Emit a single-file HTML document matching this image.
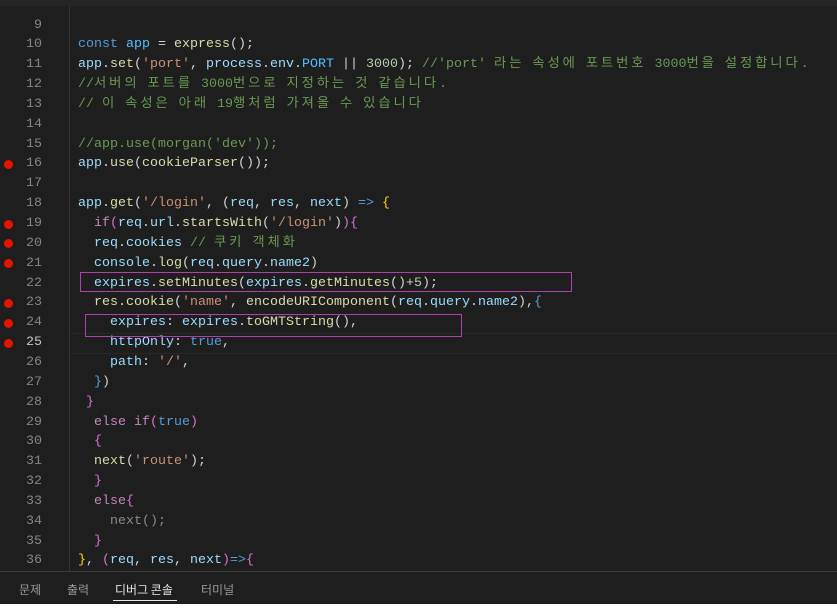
<!DOCTYPE html>
<html><head><meta charset="utf-8"><style>
html,body{margin:0;padding:0;width:837px;height:610px;overflow:hidden;background:#1e1e1e;}
.ed{position:absolute;left:0;top:0;width:837px;height:572px;background:#1e1e1e;overflow:hidden;}
.gl{position:absolute;left:69px;top:0;width:1px;height:572px;background:#333;}
.ln{position:absolute;left:0;width:42px;text-align:right;color:#858585;font:13.33px "Liberation Mono",monospace;}
.cd{position:absolute;left:78px;white-space:pre;color:#d4d4d4;font:13.33px "Liberation Mono",monospace;}
.k{font-family:"Noto Sans CJK KR",sans-serif;letter-spacing:2.9px;line-height:0;}
.bp{position:absolute;left:4px;width:9px;height:9px;border-radius:50%;background:#e51400;}
.b{color:#569cd6}.v{color:#4fc1ff}.f{color:#dcdcaa}.s{color:#ce9178}.c{color:#6a9955}.n{color:#b5cea8}.p{color:#9cdcfe}.m{color:#c586c0}.y{color:#ffd700}.pk{color:#da70d6}.g{color:#8a8a8a}
.box{position:absolute;border:1px solid #b040b0;}
.panel{position:absolute;left:0;top:571px;width:837px;height:33px;background:#1e1e1e;border-top:1px solid #3c3c3c;}
.tab{position:absolute;top:9px;color:#9a9a9a;font:12px "Noto Sans CJK KR",sans-serif;}
</style></head><body>
<div class="ed">
<div class="gl"></div>
<div class="cd" style="top:-12px;color:#777">const cookieParser = require('cookie-parser');</div>
<div style="position:absolute;left:0;top:0;width:837px;height:6px;background:#252526"></div>
<div style="position:absolute;left:70px;top:333px;width:767px;height:19px;border-top:1px solid #282828;border-bottom:1px solid #282828"></div>
<div id="L"></div>
<div class="box" style="left:80px;top:272px;width:490px;height:18px"></div>
<div class="box" style="left:85px;top:314px;width:375px;height:21px"></div>
</div>
<div class="panel">
<div class="tab" style="left:19px">문제</div>
<div class="tab" style="left:67px">출력</div>
<div class="tab" style="left:115px;color:#e7e7e7">디버그 콘솔</div>
<div style="position:absolute;left:113px;top:28px;width:64px;height:1px;background:#e7e7e7"></div>
<div class="tab" style="left:201px">터미널</div>
</div>
<div style="position:absolute;left:0;top:604px;width:837px;height:6px;background:#fff"></div>
<script>
var L=[
[9,''],
[10,'<span class="b">const</span> <span class="v">app</span> = <span class="f">express</span>();'],
[11,'<span class="p">app</span>.<span class="f">set</span>(<span class="s">\'port\'</span>, <span class="p">process</span>.<span class="p">env</span>.<span class="v">PORT</span> || <span class="n">3000</span>); <span class="c">//\'port\' <span class="k">라는</span> <span class="k">속성에</span> <span class="k">포트번호</span> 3000<span class="k">번을</span> <span class="k">설정합니다</span>.</span>'],
[12,'<span class="c">//<span class="k">서버의</span> <span class="k">포트를</span> 3000<span class="k">번으로</span> <span class="k">지정하는</span> <span class="k">것</span> <span class="k">같습니다</span>.</span>'],
[13,'<span class="c">// <span class="k">이</span> <span class="k">속성은</span> <span class="k">아래</span> 19<span class="k">행처럼</span> <span class="k">가져올</span> <span class="k">수</span> <span class="k">있습니다</span></span>'],
[14,''],
[15,'<span class="c">//app.use(morgan(\'dev\'));</span>'],
[16,'<span class="p">app</span>.<span class="f">use</span>(<span class="f">cookieParser</span>());',1],
[17,''],
[18,'<span class="p">app</span>.<span class="f">get</span>(<span class="s">\'/login\'</span>, (<span class="p">req</span>, <span class="p">res</span>, <span class="p">next</span>) <span class="b">=&gt;</span> <span class="y">{</span>'],
[19,'  <span class="m">if</span><span class="pk">(</span><span class="p">req</span>.<span class="p">url</span>.<span class="f">startsWith</span>(<span class="s">\'/login\'</span>)<span class="pk">)</span><span class="pk">{</span>',1],
[20,'  <span class="p">req</span>.<span class="p">cookies</span> <span class="c">// <span class="k">쿠키</span> <span class="k">객체화</span></span>',1],
[21,'  <span class="p">console</span>.<span class="f">log</span>(<span class="p">req</span>.<span class="p">query</span>.<span class="p">name2</span>)',1],
[22,'  <span class="p">expires</span>.<span class="f">setMinutes</span>(<span class="p">expires</span>.<span class="f">getMinutes</span>()+<span class="n">5</span>);'],
[23,'  <span class="f">res</span>.<span class="f">cookie</span>(<span class="s">\'name\'</span>, <span class="f">encodeURIComponent</span>(<span class="p">req</span>.<span class="p">query</span>.<span class="p">name2</span>),<span class="b">{</span>',1],
[24,'    <span class="p">expires</span>: <span class="p">expires</span>.<span class="f">toGMTString</span>(),',1],
[25,'    <span class="p">httpOnly</span>: <span class="b">true</span>,',1],
[26,'    <span class="p">path</span>: <span class="s">\'/\'</span>,'],
[27,'  <span class="b">}</span>)'],
[28,' <span class="pk">}</span>'],
[29,'  <span class="m">else</span> <span class="m">if</span><span class="pk">(</span><span class="b">true</span><span class="pk">)</span>'],
[30,'  <span class="pk">{</span>'],
[31,'  <span class="f">next</span>(<span class="s">\'route\'</span>);'],
[32,'  <span class="pk">}</span>'],
[33,'  <span class="m">else</span><span class="pk">{</span>'],
[34,'    <span class="g">next();</span>'],
[35,'  <span class="pk">}</span>'],
[36,'<span class="y">}</span>, <span class="pk">(</span><span class="p">req</span>, <span class="p">res</span>, <span class="p">next</span><span class="pk">)</span><span class="b">=&gt;</span><span class="pk">{</span>']
];
var h='';
L.forEach(function(l){var t=15.5+(l[0]-9)*19.85;
h+='<div class="ln" style="top:'+t+'px;line-height:19.85px;'+(l[0]==25?'color:#c6c6c6':'')+'">'+l[0]+'</div>';
h+='<div class="cd" style="top:'+t+'px;line-height:19.85px">'+l[1]+'</div>';
if(l[2])h+='<div class="bp" style="top:'+(t+5.5)+'px"></div>';});
document.getElementById('L').innerHTML=h;
</script>
</body></html>
